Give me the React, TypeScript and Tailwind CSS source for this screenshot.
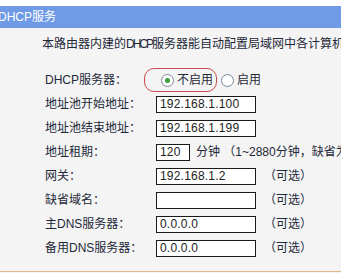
const FONT = "font-['Liberation_Sans','Noto_Sans_CJK_SC',sans-serif]";

type Row = {
  label: string;
  value?: string;
  width?: string;
  suffix?: string;
};

const ROWS: Row[] = [
  { label: "地址池开始地址：", value: "192.168.1.100" },
  { label: "地址池结束地址：", value: "192.168.1.199" },
  {
    label: "地址租期：",
    value: "120",
    width: "w-[34px]",
    suffix: "分钟 （1~2880分钟，缺省为120分钟）",
  },
  { label: "网关：", value: "192.168.1.2", suffix: "（可选）" },
  { label: "缺省域名：", value: "", suffix: "（可选）" },
  { label: "主DNS服务器：", value: "0.0.0.0", suffix: "（可选）" },
  { label: "备用DNS服务器：", value: "0.0.0.0", suffix: "（可选）" },
];

function Radio({ checked }: { checked?: boolean }) {
  return (
    <span className="flex h-[13px] w-[13px] items-center justify-center rounded-full border border-[#7a8a9a] bg-white">
      {checked && <span className="h-[5px] w-[5px] rounded-full bg-[#3aa03a]" />}
    </span>
  );
}

function Field({ row }: { row: Row }) {
  return (
    <div className="flex h-[24px] items-center">
      <div className="w-[111px] shrink-0">{row.label}</div>
      <div className="flex items-center whitespace-nowrap">
        <div
          className={`flex h-[17px] items-center border border-[#1a1a1a] bg-white pl-[3px] text-[12px] tracking-[0.2px] text-[#222] ${
            row.width ?? "w-[100px]"
          }`}
        >
          {row.value}
        </div>
        {row.suffix && (
          <span className={row.width ? "ml-[6px]" : "ml-[8px]"}>
            {row.suffix}
          </span>
        )}
      </div>
    </div>
  );
}

export default function App() {
  return (
    <div
      className={`${FONT} flex h-[273px] w-[341px] flex-col overflow-hidden bg-[#f4f4f4] text-[12px] text-[#1e2838]`}
    >
      <div className="h-[6px] bg-white" />
      <div className="flex h-[22px] items-center bg-[#6f9ae6] text-[12px] text-white">
        <span className="-ml-[2px]">DHCP服务</span>
      </div>

      <div className="flex-1 pl-[45px]">
        <div className="-ml-[3px] mt-[8px] h-[16px] whitespace-nowrap leading-[16px]">
          本路由器内建的<span className="tracking-[-2px]">DHCP</span>
          服务器能自动配置局域网中各计算机的TCP/IP协议。
        </div>

        <div className="mt-[16px]">
          <div className="flex h-[24px] items-center">
            <div className="w-[99px] shrink-0">DHCP服务器：</div>
            <div className="flex h-[24px] items-center gap-[3px] rounded-[10px] border border-[#c84a4a] pl-[16px] pr-[3px]">
              <Radio checked />
              <span>不启用</span>
            </div>
            <div className="ml-[4px] flex items-center gap-[3px]">
              <Radio />
              <span>启用</span>
            </div>
          </div>

          {ROWS.map((row) => (
            <Field key={row.label} row={row} />
          ))}
        </div>
      </div>

      <div className="mb-[1px] h-[1px] bg-[#e2b98e]" />
    </div>
  );
}
